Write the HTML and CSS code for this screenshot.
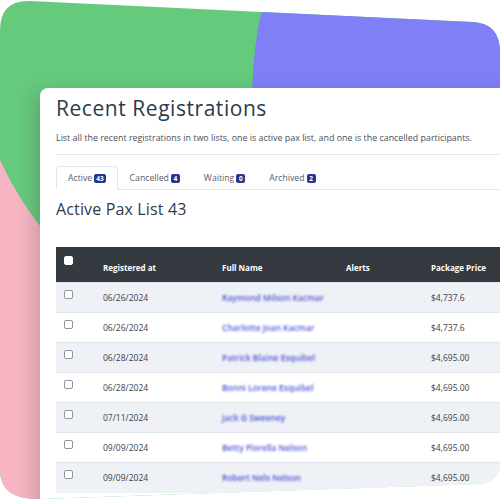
FILE: index.html
```html
<!DOCTYPE html>
<html lang="en">
<head>
<meta charset="utf-8">
<title>Recent Registrations</title>
<link rel="stylesheet" href="styles.css">
</head>
<body>
<div class="frame">
  <svg class="backdrop" width="500" height="500" viewBox="0 0 500 500" aria-hidden="true">
    <rect x="0" y="0" width="500" height="500" fill="#66ca7d"/>
    <path d="M265,0 Q252,40 252,110 L500,110 L500,0 Z" fill="#7f7ff8"/>
    <path d="M0,160 Q18,200 48,236 L48,500 L0,500 Z" fill="#f7b5c3"/>
  </svg>
  <main class="card">
    <h1 class="title">Recent Registrations</h1>
    <p class="lead">List all the recent registrations in two lists, one is active pax list, and one is the cancelled participants.</p>
    <hr class="divider">
    <ul class="tabs">
      <li class="tab is-active">Active <span class="badge">43</span></li>
      <li class="tab">Cancelled <span class="badge">4</span></li>
      <li class="tab">Waiting <span class="badge">0</span></li>
      <li class="tab">Archived <span class="badge">2</span></li>
    </ul>
    <h2 class="subtitle">Active Pax List 43</h2>
    <table class="pax">
      <colgroup>
        <col class="c-check"><col class="c-date"><col class="c-name"><col class="c-alert"><col class="c-price">
      </colgroup>
      <thead>
        <tr>
          <th class="cell-check"><span class="box box-head"></span></th>
          <th>Registered at</th>
          <th>Full Name</th>
          <th>Alerts</th>
          <th>Package Price</th>
        </tr>
      </thead>
      <tbody>
        <tr><td class="cell-check"><span class="box"></span></td><td>06/26/2024</td><td><span class="name">Raymond Milson Kacmar</span></td><td></td><td>$4,737.6</td></tr>
        <tr><td class="cell-check"><span class="box"></span></td><td>06/26/2024</td><td><span class="name">Charlotte Joan Kacmar</span></td><td></td><td>$4,737.6</td></tr>
        <tr><td class="cell-check"><span class="box"></span></td><td>06/28/2024</td><td><span class="name">Patrick Blaine Esquibel</span></td><td></td><td>$4,695.00</td></tr>
        <tr><td class="cell-check"><span class="box"></span></td><td>06/28/2024</td><td><span class="name">Bonni Lorene Esquibel</span></td><td></td><td>$4,695.00</td></tr>
        <tr><td class="cell-check"><span class="box"></span></td><td>07/11/2024</td><td><span class="name">Jack G Sweeney</span></td><td></td><td>$4,695.00</td></tr>
        <tr><td class="cell-check"><span class="box"></span></td><td>09/09/2024</td><td><span class="name">Betty Florella Nelson</span></td><td></td><td>$4,695.00</td></tr>
        <tr><td class="cell-check"><span class="box"></span></td><td>09/09/2024</td><td><span class="name">Robert Nels Nelson</span></td><td></td><td>$4,695.00</td></tr>
      </tbody>
    </table>
  </main>
</div>
</body>
</html>
```

FILE: styles.css
```css
html, body {
  margin: 0;
  padding: 0;
  background: #ffffff;
}

body {
  font-family: "Open Sans", "Noto Sans", sans-serif;
  color: #333a44;
}

.frame {
  position: relative;
  width: 500px;
  height: 500px;
  box-sizing: border-box;
  padding: 88px 0 0 40px;
  overflow: hidden;
  clip-path: path('M0,30 Q0,0 30,1 L472,22 Q500,23 500,52 L500,462 Q500,482 478,484 L40,499 Q0,500 0,470 Z');
}

.backdrop {
  position: absolute;
  left: 0;
  top: 0;
  z-index: 0;
}

.card {
  position: relative;
  z-index: 1;
  width: 520px;
  height: 440px;
  box-sizing: border-box;
  padding: 0 0 0 16px;
  background: #ffffff;
  border-top-left-radius: 8px;
  box-shadow: -6px 4px 18px rgba(60, 40, 50, 0.2);
}

.title {
  margin: 0;
  padding-top: 8px;
  font-size: 21px;
  line-height: 25px;
  font-weight: 500;
  letter-spacing: 0.55px;
  color: #2e3a4b;
}

.lead {
  margin: 11px 0 0;
  font-size: 8.9px;
  line-height: 12px;
  color: #4a4f57;
}

.divider {
  margin: 10px 0 0;
  border: 0;
  border-top: 1px solid #e6e9ed;
}

.tabs {
  display: flex;
  margin: 11px 0 0;
  padding: 0;
  list-style: none;
  border-bottom: 1px solid #e3e6ea;
}

.tab {
  display: flex;
  align-items: center;
  gap: 2px;
  height: 22px;
  padding: 0 11px;
  margin-bottom: -1px;
  font-size: 8.7px;
  color: #5b616b;
  border: 1px solid transparent;
  border-radius: 4px 4px 0 0;
}

.tab.is-active {
  border-color: #e3e6ea #e3e6ea #ffffff;
  background: #ffffff;
}

.badge {
  display: inline-block;
  min-width: 5px;
  padding: 0 2px;
  height: 9px;
  line-height: 9px;
  font-size: 6.5px;
  font-weight: 700;
  text-align: center;
  color: #ffffff;
  background: #2a3590;
  border-radius: 2px;
}

.subtitle {
  margin: 8px 0 0;
  font-size: 16px;
  line-height: 22px;
  font-weight: 500;
  letter-spacing: 0.15px;
  color: #2e3a4b;
}

.pax {
  margin-top: 27px;
  width: 457px;
  table-layout: fixed;
  border-collapse: collapse;
  font-size: 8.5px;
}

.c-check { width: 39px; }
.c-date { width: 119px; }
.c-name { width: 124px; }
.c-alert { width: 85px; }
.c-price { width: 90px; }

.pax th {
  background: #343a40;
  color: #ffffff;
  font-weight: 700;
  font-size: 8px;
  text-align: left;
  padding: 14px 8px 8px;
  line-height: 13px;
  vertical-align: middle;
}

.pax th.cell-check {
  vertical-align: top;
  padding-top: 9px;
}

.pax td {
  height: 30px;
  box-sizing: border-box;
  padding: 0 8px;
  vertical-align: middle;
  color: #3a3f47;
  border-top: 1px solid #e2e6ea;
}

.pax td.cell-check {
  vertical-align: top;
  padding-top: 7px;
}

.pax tbody tr:nth-child(odd) td {
  background: #eef1f5;
}

.box {
  display: block;
  width: 7px;
  height: 7px;
  border: 1px solid #8f959c;
  border-radius: 2px;
  background: #ffffff;
}

.box-head {
  border-color: #ffffff;
}

.name {
  color: #4f55d9;
  font-weight: 600;
  filter: blur(1.1px);
}
```
